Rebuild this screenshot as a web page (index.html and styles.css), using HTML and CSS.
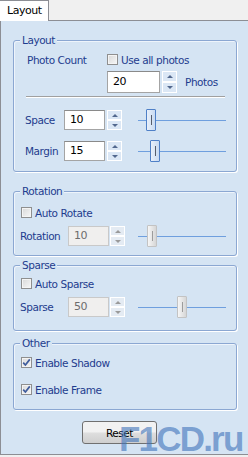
FILE: index.html
```html
<!DOCTYPE html>
<html lang="en">
<head>
    <meta charset="UTF-8">
    <link rel="stylesheet" href="styles.css">
    <title>Layout</title>
</head>
<body>
    <div class="tabs">
        <div class="tab">Layout</div>
    </div>
    <div class="panel">
        <div class="group g-layout">
            <span class="legend">Layout</span>
            <div class="row r-count">
                <span class="label lbl-count">Photo Count</span>
                <label class="check"><span class="box"></span>Use all photos</label>
            </div>
            <div class="row r-photos">
                <div class="num tall">20</div>
                <div class="spin tall"><span class="up"></span><span class="down"></span></div>
                <span class="label lbl-photos">Photos</span>
            </div>
            <div class="sep"></div>
            <div class="row r-space">
                <span class="label lbl-wide">Space</span>
                <div class="num">10</div>
                <div class="spin"><span class="up"></span><span class="down"></span></div>
                <div class="slider"><span class="thumb" style="margin-left: 8px"></span></div>
            </div>
            <div class="row r-margin">
                <span class="label lbl-wide">Margin</span>
                <div class="num">15</div>
                <div class="spin"><span class="up"></span><span class="down"></span></div>
                <div class="slider"><span class="thumb" style="margin-left: 12px"></span></div>
            </div>
        </div>

        <div class="group g-rotation">
            <span class="legend">Rotation</span>
            <div class="row r-check">
                <label class="check"><span class="box"></span>Auto Rotate</label>
            </div>
            <div class="row r-field">
                <span class="label lbl-narrow">Rotation</span>
                <div class="num off">10</div>
                <div class="spin off"><span class="up"></span><span class="down"></span></div>
                <div class="slider off"><span class="thumb" style="margin-left: 9px"></span></div>
            </div>
        </div>

        <div class="group g-sparse">
            <span class="legend">Sparse</span>
            <div class="row r-check">
                <label class="check"><span class="box"></span>Auto Sparse</label>
            </div>
            <div class="row r-field">
                <span class="label lbl-narrow">Sparse</span>
                <div class="num off">50</div>
                <div class="spin off"><span class="up"></span><span class="down"></span></div>
                <div class="slider off"><span class="thumb" style="margin-left: 39px"></span></div>
            </div>
        </div>

        <div class="group g-other">
            <span class="legend">Other</span>
            <div class="row r-check r-shadow">
                <label class="check"><span class="box on"><svg width="9" height="9" viewBox="0 0 9 9"><path d="M1.2 4.6 L3.4 7 L7.8 1.4" fill="none" stroke="#3f5c9c" stroke-width="1.7"/></svg></span>Enable Shadow</label>
            </div>
            <div class="row r-check r-frame">
                <label class="check"><span class="box on"><svg width="9" height="9" viewBox="0 0 9 9"><path d="M1.2 4.6 L3.4 7 L7.8 1.4" fill="none" stroke="#3f5c9c" stroke-width="1.7"/></svg></span>Enable Frame</label>
            </div>
        </div>

        <button class="reset">Reset</button>
    </div>
    <div class="mark">F1CD.ru</div>
</body>
</html>
```

FILE: styles.css
```css
        body{
            margin: 0;
            width: 248px;
            height: 457px;
            overflow: hidden;
            position: relative;
            background: #f0f0f0;
            font-family: "DejaVu Sans", sans-serif;
            font-size: 10.5px;
            letter-spacing: -0.45px;
        }
        /*tab strip on top*/
        .tabs{
            display: flex;
            height: 20px;
            border-bottom: 1px solid #8c8e94;
        }
        .tab{
            position: relative;
            box-sizing: border-box;
            width: 49px;
            height: 21px;
            margin-bottom: -1px;
            padding-left: 7px;
            background: #fff;
            border: 1px solid #8c8e94;
            border-bottom: none;
            border-left: none;
            color: #000;
            font-size: 11px;
            line-height: 20px;
        }
        .panel{
            box-sizing: border-box;
            height: 434px;
            background: #d5e4f3;
            border-left: 1px solid #8c8e94;
            border-bottom: 1px solid #8c8e94;
            overflow: hidden;
        }
        /*group boxes*/
        .group{
            position: relative;
            box-sizing: border-box;
            width: 224px;
            margin-left: 12px;
            border: 1px solid #8ba7d2;
            border-radius: 3px;
            box-shadow: 1px 1px 0 #fff, inset 1px 1px 0 #eef4fb;
        }
        .legend{
            position: absolute;
            top: -7px;
            left: 6px;
            padding: 0 2px;
            line-height: 12px;
            background: #d5e4f3;
            color: #1e3c8e;
        }
        .g-layout{ margin-top: 19px; padding-bottom: 10px; }
        .g-rotation{ margin-top: 19px; padding-bottom: 9px; }
        .g-sparse{ margin-top: 9px; padding-bottom: 13px; }
        .g-other{ margin-top: 12px; padding-bottom: 13px; }

        .row{
            display: flex;
            align-items: center;
        }
        .label{
            color: #1e3c8e;
        }
        .r-count{ margin-top: 12px; height: 13px; }
        .lbl-count{ width: 80px; padding-left: 13px; }
        .r-photos{ margin-top: 5px; height: 22px; padding-left: 93px; }
        .lbl-photos{ margin-left: 8px; }
        .r-space{ margin-top: 12px; height: 20px; }
        .r-margin{ margin-top: 11px; height: 20px; }
        .lbl-wide{ width: 39px; padding-left: 11px; }
        .r-check{ margin-top: 14px; height: 13px; padding-left: 7px; }
        .g-sparse .r-check{ margin-top: 11px; }
        .r-shadow{ margin-top: 12px; }
        .r-field{ margin-top: 7px; height: 20px; }
        .lbl-narrow{ width: 48px; padding-left: 6px; }

        .sep{
            width: 199px;
            margin: 3px 0 0 12px;
            border-top: 1px solid #a0a0a0;
            border-bottom: 1px solid #fff;
        }
        /*checkbox*/
        .check{
            display: flex;
            align-items: center;
            color: #1e3c8e;
        }
        .box{
            box-sizing: border-box;
            display: flex;
            align-items: center;
            justify-content: center;
            width: 11px;
            height: 11px;
            margin-right: 3px;
            border: 1px solid #8f8f8f;
            background: linear-gradient(135deg, #d8d8d8, #f7f7f7);
            box-shadow: inset 0 0 0 1px #f4f4f4;
        }
        .box.on{
            background: linear-gradient(135deg, #dcdcdc, #f2f2f2);
        }
        /*numeric input + spinner*/
        .num{
            box-sizing: border-box;
            width: 41px;
            height: 20px;
            padding-left: 5px;
            background: #fff;
            border: 1px solid #a4a4a4;
            border-top-color: #8a8a8a;
            color: #000;
            font-size: 11px;
            line-height: 18px;
        }
        .num.tall{
            width: 53px;
            height: 22px;
            line-height: 20px;
        }
        .num.off{
            background: #f0efee;
            border-color: #c9c9c9;
            color: #6d6d6d;
        }
        .spin{
            display: flex;
            flex-direction: column;
            width: 15px;
            height: 20px;
            margin-left: 2px;
        }
        .spin.tall{ height: 22px; }
        .spin.off{ margin-left: 1px; }
        .spin span{
            flex: 1;
            position: relative;
            box-sizing: border-box;
            border: 1px solid #fff;
            background: #dbe7f5;
        }
        .spin span::after{
            content: "";
            position: absolute;
            left: 4px;
            top: 3px;
            border-left: 3px solid transparent;
            border-right: 3px solid transparent;
        }
        .spin .up::after{ border-bottom: 3px solid #52688e; }
        .spin .down::after{ border-top: 3px solid #52688e; }
        .spin.off .up::after{ border-bottom-color: #9a9a9a; }
        .spin.off .down::after{ border-top-color: #9a9a9a; }
        .spin.off span{ background: #e4ebf3; }

        /*track bar*/
        .slider{
            display: flex;
            align-items: center;
            width: 88px;
            height: 22px;
            margin-left: 16px;
            background: linear-gradient(#6f9fde, #6f9fde) center / 100% 1px no-repeat;
        }
        .slider.off{ margin-left: 13px; }
        .thumb{
            position: relative;
            box-sizing: border-box;
            width: 10px;
            height: 22px;
            border: 1px solid #4f80c7;
            border-radius: 1px;
            background: linear-gradient(to right, #e9f0fa, #c8daf1);
        }
        .thumb::after{
            content: "";
            position: absolute;
            left: 4px;
            top: 5px;
            width: 1px;
            height: 10px;
            background: #555d6b;
        }
        .slider.off .thumb{
            border-color: #c3c3c3;
            background: linear-gradient(to right, #f6f6f6, #d6d6d6);
        }
        .slider.off .thumb::after{ background: #9c9c9c; }

        .reset{
            display: block;
            box-sizing: border-box;
            width: 75px;
            height: 23px;
            margin: 11px 0 0 81px;
            border: 1px solid #707070;
            border-radius: 3px;
            background: linear-gradient(#f2f2f2 45%, #dddddd 55%, #cfcfcf);
            font-family: "DejaVu Sans", sans-serif;
            font-size: 10.5px;
            letter-spacing: -0.45px;
            color: #000;
            padding: 0;
        }
        /*watermark over the corner*/
        .mark{
            position: absolute;
            left: 119px;
            top: 421px;
            font-family: "Liberation Sans", sans-serif;
            font-weight: 700;
            font-size: 35px;
            line-height: 35px;
            letter-spacing: -1.8px;
            color: rgba(63, 115, 186, 0.62);
        }
```
